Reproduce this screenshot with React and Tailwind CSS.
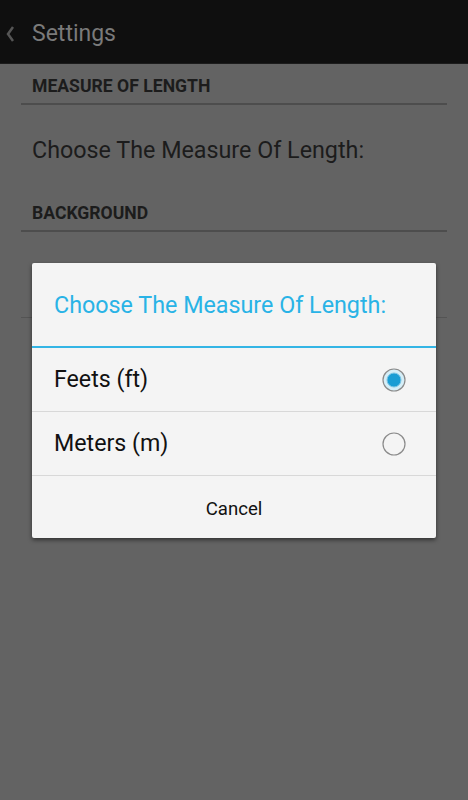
import React from "react";

export default function App() {
  const font = { fontFamily: "Roboto, 'Noto Sans', sans-serif" };
  return (
    <div className="relative w-[468px] h-[800px] bg-[#636363] overflow-hidden" style={font}>
      <div className="h-[64px] bg-[#0f0f0f] flex items-center border-b border-[#1c1c1c]">
        <svg width="14" height="20" viewBox="0 0 14 20" className="ml-[3px] mt-[4px]">
          <path d="M10 3 L5 10 L10 17" stroke="#555" strokeWidth="2.5" fill="none" />
        </svg>
        <span className="ml-[15px] text-[23px] text-[#7a7a7a] mt-[5px]">Settings</span>
      </div>
      <div className="px-[21px]">
        <div className="h-[41px] border-b-2 border-[#4d4d4d] flex items-center pl-[11px] pt-[5px]">
          <span className="text-[17.6px] font-bold text-[#1c1c1c]">MEASURE OF LENGTH</span>
        </div>
        <div className="h-[86px] flex items-center pl-[11px] pt-[4px]">
          <span className="text-[23.3px] text-[#1c1c1c]">Choose The Measure Of Length:</span>
        </div>
        <div className="h-[41px] border-b-2 border-[#4d4d4d] flex items-center pl-[11px] pt-[5px]">
          <span className="text-[17.6px] font-bold text-[#1c1c1c]">BACKGROUND</span>
        </div>
        <div className="h-[86px] border-b border-[#545454]"></div>
      </div>

      <div className="absolute left-[32px] top-[263px] w-[404px] bg-[#f4f4f4] rounded-[2px] shadow-[0_2px_4px_rgba(0,0,0,0.5)]">
        <div className="h-[85px] flex items-center pl-[22px] border-b-2 border-[#33b5e5]">
          <span className="text-[23.3px] text-[#29b3e6] mt-[1px]">Choose The Measure Of Length:</span>
        </div>
        <div className="h-[64px] flex items-center justify-between pl-[22px] pr-[30px] border-b border-[#d8d8d8]">
          <span className="text-[23.2px] text-[#111]">Feets (ft)</span>
          <svg width="24" height="24" viewBox="0 0 24 24">
            <circle cx="12" cy="12" r="11" fill="#d6eef7" stroke="#8a8a8a" strokeWidth="1.2" />
            <circle cx="12" cy="12" r="7" fill="#1a9dd4" stroke="#7fc6e4" strokeWidth="1" />
          </svg>
        </div>
        <div className="h-[64px] flex items-center justify-between pl-[22px] pr-[30px] border-b border-[#d8d8d8]">
          <span className="text-[23.2px] text-[#111]">Meters (m)</span>
          <svg width="24" height="24" viewBox="0 0 24 24">
            <circle cx="12" cy="12" r="11" fill="none" stroke="#8a8a8a" strokeWidth="1.2" />
          </svg>
        </div>
        <div className="h-[62px] flex items-center justify-center pt-[5px]">
          <span className="text-[18.6px] text-[#111]">Cancel</span>
        </div>
      </div>
    </div>
  );
}
